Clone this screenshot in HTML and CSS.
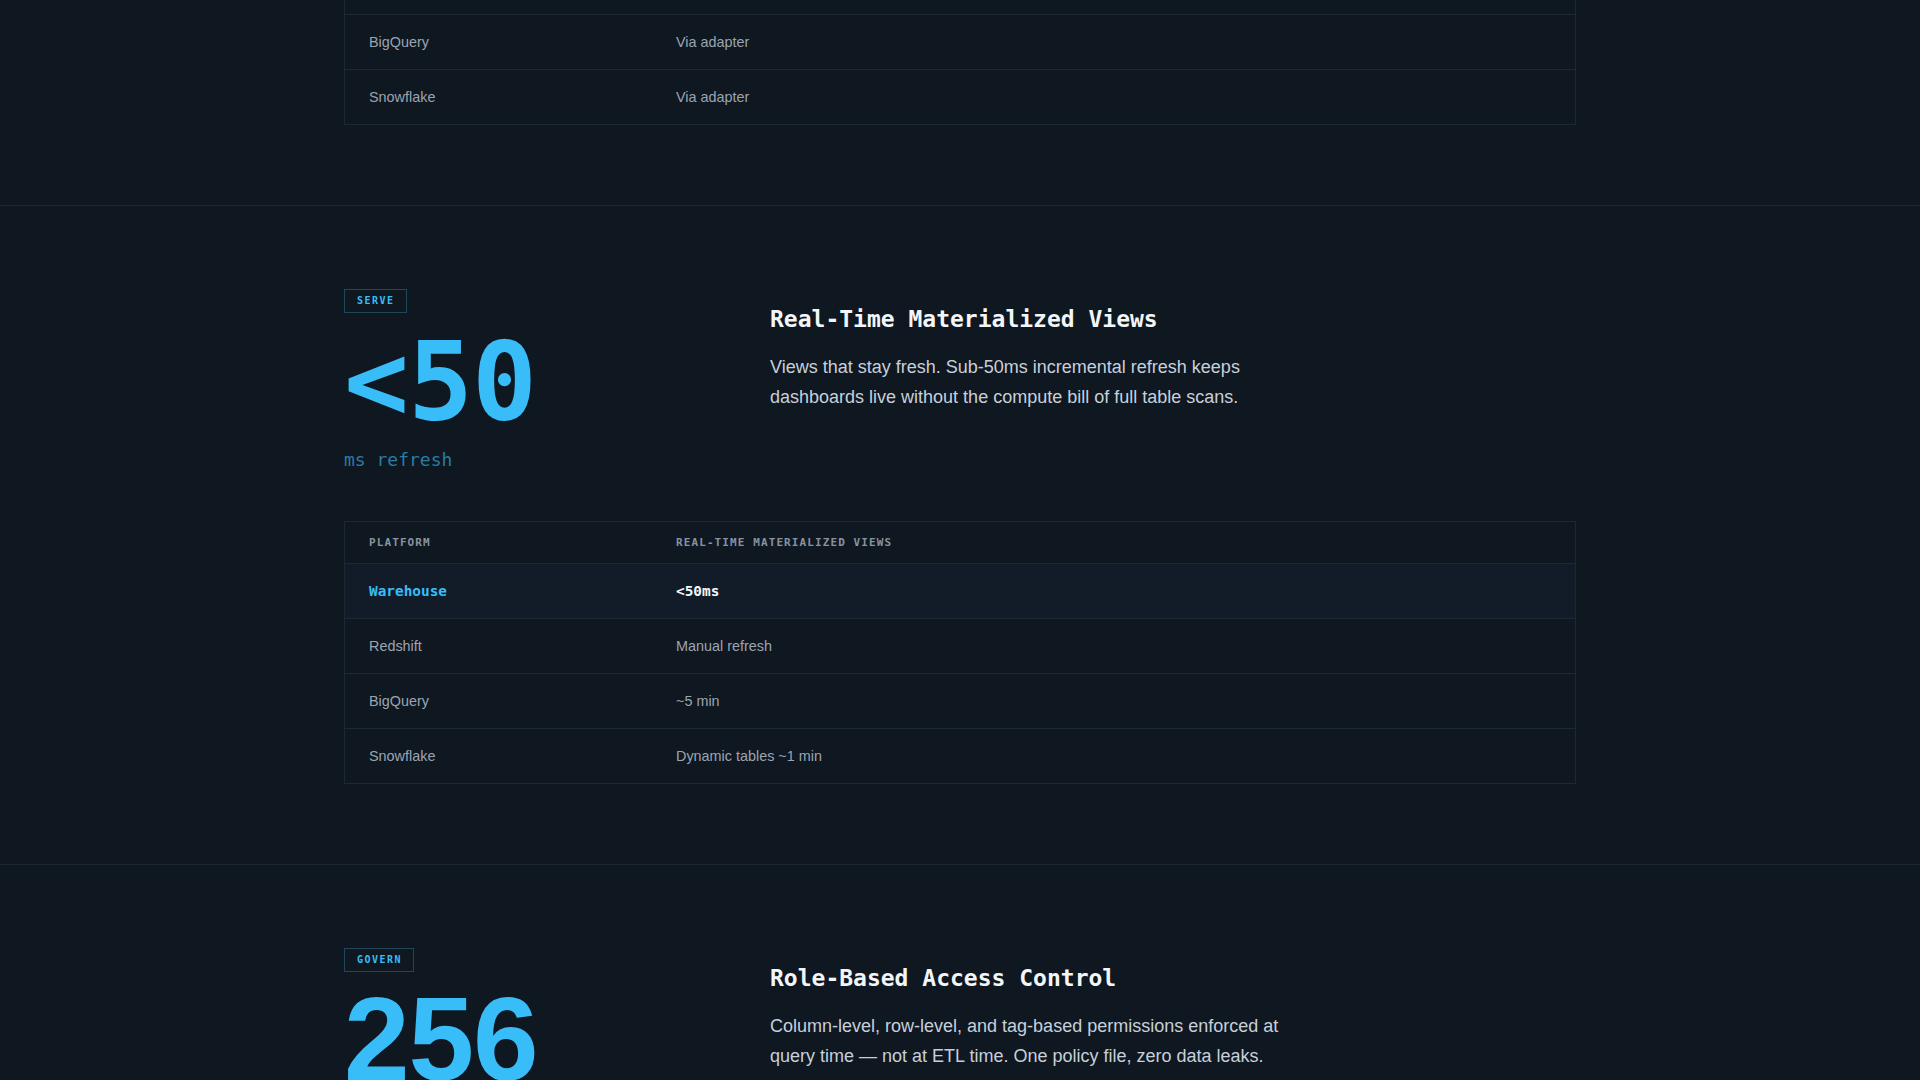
FILE: index.html
```html
<!DOCTYPE html>
<html lang="en">
<head>
    <meta charset="UTF-8">
    <meta name="viewport" content="width=device-width, initial-scale=1.0">
    <title>Warehouse — Features</title>
    <link rel="stylesheet" href="styles.css">
</head>
<body>
    <!-- tail of the previous feature (scrolled) -->
    <section class="feature feature-tail">
        <div class="container">
            <table class="compare">
                <thead>
                    <tr><th>Platform</th><th>Open table formats</th></tr>
                </thead>
                <tbody>
                    <tr class="us"><td>Warehouse</td><td>Native</td></tr>
                    <tr><td>Redshift</td><td>Limited</td></tr>
                    <tr><td>BigQuery</td><td>Via adapter</td></tr>
                    <tr><td>Snowflake</td><td>Via adapter</td></tr>
                </tbody>
            </table>
        </div>
    </section>

    <!-- serve -->
    <section class="feature">
        <div class="container">
            <div class="feature-grid">
                <div class="stat">
                    <span class="tag">Serve</span>
                    <div class="stat-value">&lt;50</div>
                    <div class="stat-unit">ms refresh</div>
                </div>
                <div class="copy">
                    <h2>Real-Time Materialized Views</h2>
                    <p>Views that stay fresh. Sub-50ms incremental refresh keeps dashboards live without the compute bill of full table scans.</p>
                </div>
            </div>
            <table class="compare">
                <thead>
                    <tr><th>Platform</th><th>Real-Time Materialized Views</th></tr>
                </thead>
                <tbody>
                    <tr class="us"><td>Warehouse</td><td>&lt;50ms</td></tr>
                    <tr><td>Redshift</td><td>Manual refresh</td></tr>
                    <tr><td>BigQuery</td><td>~5 min</td></tr>
                    <tr><td>Snowflake</td><td>Dynamic tables ~1 min</td></tr>
                </tbody>
            </table>
        </div>
    </section>

    <!-- govern -->
    <section class="feature">
        <div class="container">
            <div class="feature-grid">
                <div class="stat">
                    <span class="tag">Govern</span>
                    <div class="stat-value stat-sans">256</div>
                    <div class="stat-unit">policy rules</div>
                </div>
                <div class="copy">
                    <h2>Role-Based Access Control</h2>
                    <p>Column-level, row-level, and tag-based permissions enforced at query time — not at ETL time. One policy file, zero data leaks.</p>
                </div>
            </div>
        </div>
    </section>
</body>
</html>
```

FILE: styles.css
```css
/* page */
body {
    margin: 0;
    background-color: #0f1721;
    color: #c9d2dc;
    font-family: "Liberation Sans", Arial, sans-serif;
}
.container {
    max-width: 1232px;
    margin: 0 auto;
}

/* feature sections */
.feature {
    border-top: 1px solid #1b2631;
    padding: 83px 0 80px;
}
.feature-tail {
    border-top: none;
    padding-top: 0;
    margin-top: -138px;
}
.feature-grid {
    display: grid;
    grid-template-columns: 362px 1fr;
    gap: 64px;
    margin-bottom: 48px;
}

/* left: badge + big number */
.tag {
    display: inline-block;
    padding: 5px 11px 5px 12px;
    border: 1px solid #1f4659;
    color: #38bdf8;
    font-family: "DejaVu Sans Mono", monospace;
    font-size: 10px;
    font-weight: bold;
    line-height: 12px;
    letter-spacing: 0.15em;
    text-transform: uppercase;
}
.stat-value {
    margin-top: 15px;
    color: #38bdf8;
    font-family: "DejaVu Sans Mono", monospace;
    font-size: 108px;
    font-weight: bold;
    line-height: 1;
    letter-spacing: -0.01em;
}
.stat-sans {
    margin-top: 8px;
    font-family: "Liberation Sans", Arial, sans-serif;
    font-size: 118px;
    letter-spacing: -0.01em;
}
.stat-unit {
    margin-top: 10px;
    color: #2a7ca3;
    font-family: "DejaVu Sans Mono", monospace;
    font-size: 18px;
    line-height: 27px;
}

/* right: copy */
.copy {
    padding-top: 15px;
}
.copy h2 {
    margin: 0 0 19px;
    color: #f3f6f9;
    font-family: "DejaVu Sans Mono", monospace;
    font-size: 23px;
    font-weight: bold;
    line-height: 30px;
}
.copy p {
    max-width: 540px;
    margin: 0;
    color: #c7d0da;
    font-size: 18px;
    line-height: 29.5px;
}

/* comparison table */
.compare {
    width: 100%;
    table-layout: fixed;
    border-collapse: collapse;
    border: 1px solid #1d2833;
}
.compare th {
    padding: 14px 24px;
    border-bottom: 1px solid #1d2833;
    color: #8893a0;
    font-family: "DejaVu Sans Mono", monospace;
    font-size: 11px;
    font-weight: bold;
    line-height: 13px;
    letter-spacing: 0.1em;
    text-align: left;
    text-transform: uppercase;
}
.compare th:first-child {
    width: 259px;
}
.compare td {
    padding: 16px 24px;
    border-bottom: 1px solid #1d2833;
    color: #9ba5b1;
    font-size: 14.4px;
    line-height: 22px;
}
.compare tr.us {
    background-color: #111c28;
}
.compare tr.us td {
    color: #f3f6f9;
    font-family: "DejaVu Sans Mono", monospace;
    font-weight: bold;
}
.compare tr.us td:first-child {
    color: #38bdf8;
}
```
